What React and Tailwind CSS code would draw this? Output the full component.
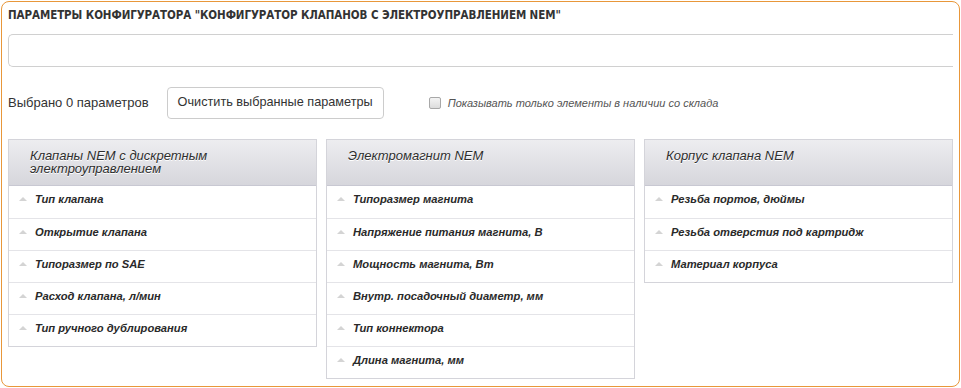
const panels = [
  {
    title: "Клапаны NEM с дискретным электроуправлением",
    items: ["Тип клапана", "Открытие клапана", "Типоразмер по SAE", "Расход клапана, л/мин", "Тип ручного дублирования"],
  },
  {
    title: "Электромагнит NEM",
    items: [
      "Типоразмер магнита",
      "Напряжение питания магнита, В",
      "Мощность магнита, Вт",
      "Внутр. посадочный диаметр, мм",
      "Тип коннектора",
      "Длина магнита, мм",
    ],
  },
  {
    title: "Корпус клапана NEM",
    items: ["Резьба портов, дюймы", "Резьба отверстия под картридж", "Материал корпуса"],
  },
];

function Panel({ title, items }) {
  return (
    <div className="w-[309px] border border-[#d4d4da] bg-white">
      <div className="h-[46px] border-b border-[#c8c8d2] bg-gradient-to-b from-[#ededf0] to-[#d6d6dc] pl-[21px] pr-4 pt-[9px]">
        <div className="text-[13px] leading-[13px] italic text-[#2e2e2e] [text-shadow:0_1px_0_#fff]">{title}</div>
      </div>
      {items.map((it, i) => (
        <div
          key={it}
          className={`flex h-[32px] items-start pl-[10px] pt-[7px] ${i > 0 ? "border-t border-[#e4e4e8]" : ""}`}
        >
          <span className="mt-[4px] h-0 w-0 border-x-[4px] border-b-[4px] border-x-transparent border-b-[#d4d4d4]" />
          <span className="ml-[8px] text-[11.2px] font-bold italic leading-[13px] text-[#2a2a2a]">{it}</span>
        </div>
      ))}
    </div>
  );
}

export default function App() {
  return (
    <div className="bg-white font-['Liberation_Sans',Arial,sans-serif]">
      <div className="ml-px mt-px w-[959px] overflow-hidden rounded-lg border border-[#e8973a] pb-[7px] pl-[6px] pr-[6px] pt-[5px]">
        <div className="font-['DejaVu_Sans_Condensed','DejaVu_Sans',sans-serif] text-[11.5px] font-bold leading-[16px] tracking-[-0.08px] text-[#333]">
          ПАРАМЕТРЫ КОНФИГУРАТОРА "КОНФИГУРАТОР КЛАПАНОВ С ЭЛЕКТРОУПРАВЛЕНИЕМ NEM"
        </div>
        <div className="mt-[11px] h-[33px] rounded-l-[5px] border-y border-l border-[#d0d0d0]" />
        <div className="mt-[20px] flex h-[32px] items-center">
          <span className="text-[13px] text-[#333]">Выбрано 0 параметров</span>
          <button className="ml-[18px] h-[32px] rounded-[4px] border border-[#cccccc] bg-white px-[10px] text-[12.7px] text-[#333]">
            Очистить выбранные параметры
          </button>
          <span className="ml-[45px] h-[12px] w-[12px] rounded-[2px] border border-[#a8a8a8] bg-gradient-to-b from-[#f4f4f4] to-[#dcdcdc]" />
          <span className="ml-[7px] text-[11px] italic text-[#555]">
            Показывать только элементы в наличии со склада
          </span>
        </div>
        <div className="mt-[20px] flex items-start gap-[9px]">
          {panels.map((p) => (
            <Panel key={p.title} title={p.title} items={p.items} />
          ))}
        </div>
      </div>
    </div>
  );
}
